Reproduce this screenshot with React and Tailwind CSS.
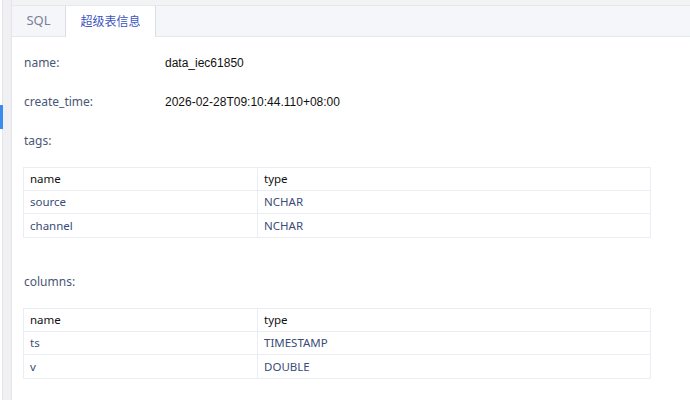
import React from "react";

const font = { fontFamily: '"Noto Sans", "Noto Sans CJK SC", sans-serif' };
const lib = { fontFamily: '"Liberation Sans", "Noto Sans", sans-serif' };

function InfoTable({ rows }) {
  return (
    <div className="ml-[11px] mr-[39px] border border-[#ebedf5]">
      <div className="flex h-[23px] items-center border-b border-[#ebedf5] text-[11.5px] text-[#111]">
        <div className="w-[234px] pl-[6px] border-r border-[#ebedf5] h-full flex items-center">name</div>
        <div className="flex-1 pl-[6px]">type</div>
      </div>
      {rows.map((r, i) => (
        <div
          key={r[0]}
          className={"flex h-[23px] items-center text-[11.5px] text-[#3a4c78] " + (i < rows.length - 1 ? "border-b border-[#ebedf5]" : "")}
        >
          <div className="w-[234px] pl-[6px] border-r border-[#ebedf5] h-full flex items-center">{r[0]}</div>
          <div className="flex-1 pl-[6px]">{r[1]}</div>
        </div>
      ))}
    </div>
  );
}

export default function App() {
  return (
    <div className="w-[690px] h-[400px] overflow-hidden flex bg-white" style={font}>
      <div className="w-[3px] h-full bg-white border-r border-[#e3e5ea] relative">
        <div className="absolute left-0 top-[105px] w-[3px] h-[24px] bg-[#3b8cf0]" />
      </div>
      <div className="w-[9px] h-full bg-[#f0f0f2] border-r border-[#e3e5ea]" />
      <div className="flex-1 flex flex-col">
        <div className="h-[5px] bg-[#f2f3f3]" />
        <div className="h-[32px] flex bg-[#f5f6fa] border-t border-[#dcdee6] border-b border-[#e6e8ee]">
          <div className="w-[53px] flex items-center justify-center text-[13px] text-[#7a8194]">SQL</div>
          <div className="w-[91px] -mb-px bg-white border-x border-[#dcdee6] flex items-center justify-center text-[12px] text-[#3b55c2]">超级表信息</div>
        </div>
        <div className="flex-1 bg-white">
          <div className="flex items-center h-[20px] mt-[16px] pl-[12px]">
            <div className="w-[141px] text-[12px] text-[#4a5675]">name:</div>
            <div className="text-[12px] text-[#111]" style={lib}>data_iec61850</div>
          </div>
          <div className="flex items-center h-[20px] mt-[19px] pl-[12px]">
            <div className="w-[141px] text-[12px] text-[#4a5675]">create_time:</div>
            <div className="text-[12px] text-[#111]" style={lib}>2026-02-28T09:10:44.110+08:00</div>
          </div>
          <div className="flex items-center h-[20px] mt-[19px] pl-[12px] text-[12px] text-[#4a5675]">tags:</div>
          <div className="mt-[16px]">
            <InfoTable rows={[["source", "NCHAR"], ["channel", "NCHAR"]]} />
          </div>
          <div className="flex items-center h-[20px] mt-[34px] pl-[12px] text-[12px] text-[#4a5675]">columns:</div>
          <div className="mt-[16px]">
            <InfoTable rows={[["ts", "TIMESTAMP"], ["v", "DOUBLE"]]} />
          </div>
        </div>
      </div>
    </div>
  );
}
